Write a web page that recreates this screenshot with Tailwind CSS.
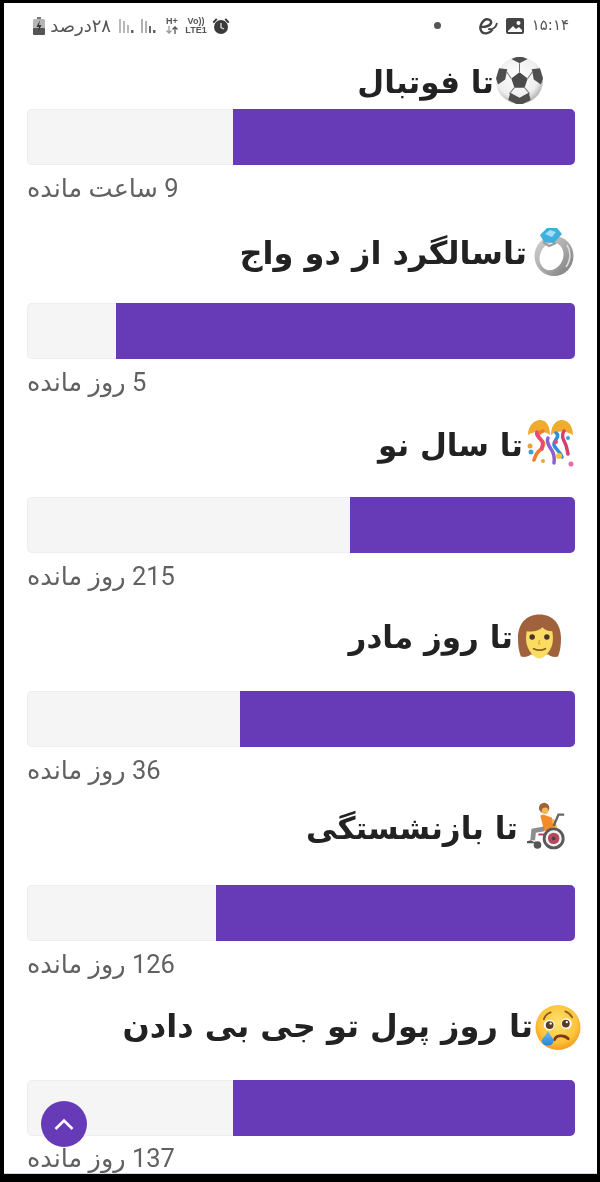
<!DOCTYPE html>
<html lang="fa">
<head>
    <meta charset="UTF-8">
    <title>تا فوتبال</title>
    <meta name="viewport" content="width=device-width, initial-scale=1"/>
    <script src="https://cdn.jsdelivr.net/npm/@tailwindcss/browser@4"></script>
</head>
<body class="bg-black">
<div class="w-[600px] h-[1182px] bg-black pt-[3px] pl-[4px] pr-[3px] pb-[8px] overflow-hidden">
    <div class="relative w-full h-full bg-white overflow-hidden border-b border-gray-300 blur-[0.4px] font-['DejaVu_Sans',sans-serif]">

        <!--Status bar-->
        <div class="h-[45px] pl-[29px] pr-[28px] flex items-center text-[#555555]">
            <svg width="12" height="18" viewBox="0 0 12 18" class="mr-[4px]">
                <rect x="4" y="0" width="4" height="2" fill="#777"/>
                <rect x="0" y="2" width="12" height="16" rx="1.500" fill="#b5b5b5"/>
                <rect x="0" y="11" width="12" height="7" rx="1" fill="#555"/>
                <path d="M7 3 3.500 10h2.500L5 15l3.500-7H6z" fill="#333"/>
            </svg>
            <span dir="rtl" class="text-[18px] w-[62px] whitespace-nowrap">۲۸درصد</span>
            <svg width="15" height="16" viewBox="0 0 15 16" class="ml-[8px]" fill="#b9b9b9">
                <rect x="0" y="1" width="2" height="14"/><rect x="4" y="3" width="2" height="12"/><rect x="8" y="7" width="2" height="8"/><rect x="12" y="12" width="2.500" height="3" fill="#666"/>
            </svg>
            <svg width="15" height="16" viewBox="0 0 15 16" class="ml-[7px]" fill="#b0b0b0">
                <rect x="0" y="1" width="2" height="14"/><rect x="4" y="3" width="2" height="12"/><rect x="8" y="8" width="2" height="7" fill="#666"/><rect x="12" y="12" width="2.500" height="3" fill="#666"/>
            </svg>
            <div class="ml-[9px] w-[14px] flex flex-col items-center font-['Liberation_Sans',sans-serif] font-bold text-[9px] leading-[9px]">
                <span>H+</span>
                <svg width="14" height="8" viewBox="0 0 14 8" fill="none" stroke="#555" stroke-width="1.300"><path d="M4 0v7M1.500 4.500 4 7l2.500-2.500" stroke="#999"/><path d="M10 8V1M7.500 3.500 10 1l2.500 2.500"/></svg>
            </div>
            <div class="ml-[6px] w-[22px] flex flex-col items-center font-['Liberation_Sans',sans-serif] font-bold text-[9px] leading-[9px]">
                <span>Vo))</span>
                <span>LTE1</span>
            </div>
            <svg width="18" height="18" viewBox="0 0 18 18" class="ml-[5px]" fill="#3a3a3a">
                <circle cx="9" cy="10" r="7"/>
                <path d="M0.500 5 4 1.200l1.500 1.300L2 6.300zM17.500 5 14 1.200l-1.500 1.300L16 6.300z"/>
                <path d="M9 6v4.500l3 1.500" fill="none" stroke="#ddd" stroke-width="1.300"/>
            </svg>
            <span class="ml-auto mr-[37px] w-[7px] h-[7px] rounded-full bg-[#555555]"></span>
            <svg width="20" height="18" viewBox="0 0 20 18" class="mr-[8px]" fill="none" stroke="#444" stroke-width="2.400">
                <path d="M2.500 9.500c4 1 9.500-.5 10.500-3.500S9 1 6 3.500 1 11 3.500 14.500s9 1.500 11-2"/>
                <path d="M10 12c4 1 8-1 9-6" stroke-width="1.800"/>
            </svg>
            <svg width="18" height="16" viewBox="0 0 18 16" class="mr-[9px]">
                <rect width="18" height="16" rx="2" fill="#444"/>
                <path d="M2 13 7 8l3 3 3-2 3 3v2H2z" fill="#fff"/>
                <circle cx="12.500" cy="5" r="2" fill="#fff"/>
            </svg>
            <span dir="rtl" class="text-[15px] w-[36px] whitespace-nowrap">۱۵:۱۴</span>
        </div>

        <!--Football-->
        <section>
            <div dir="rtl" class="h-[61px] pr-[54px] flex items-start gap-[2px]">
                <svg width="47" height="47" viewBox="0 0 46 46" class="mt-[9px] shrink-0">
                    <defs><radialGradient id="ball" cx="45%" cy="40%" r="60%"><stop offset="0" stop-color="#fff"/><stop offset="0.75" stop-color="#eee"/><stop offset="1" stop-color="#b5b5b5"/></radialGradient></defs>
                    <circle cx="23" cy="23" r="23" fill="url(#ball)"/>
                    <path d="M23 15 31 21 28 30H18L15 21Z" fill="#4a4a4a"/>
                    <path d="M15 2 23 6 31 2 26 0H20ZM3 11 11 12 9 22 2 27 0 21ZM43 11 35 12 37 22 44 27 46 21ZM12 42 14 35 23 40 32 35 34 42 26 46H20Z" fill="#4f4f4f"/>
                    <path d="M23 15V6M15 21 10 14M31 21 36 14M18 30 13 36M28 30 33 36" stroke="#777" stroke-width="1"/>
                </svg>
                <h2 class="text-[31px] font-bold leading-[46px] mt-[11px] text-[#222222] whitespace-nowrap">تا فوتبال</h2>
            </div>
            <div dir="rtl" class="ml-[23px] mr-[22px] h-14 bg-[#f5f5f5] shadow-[inset_0_0_0_1px_#eeeeee] rounded-[5px] overflow-hidden">
                <div class="w-[342px] h-full bg-[#673ab7]"></div>
            </div>
            <p dir="rtl" class="ml-[23px] w-fit h-[46px] leading-[47px] text-[25.5px] text-[#616161] font-['Roboto','DejaVu_Sans',sans-serif] whitespace-nowrap">9 ساعت مانده</p>
        </section>

        <!--Anniversary-->
        <section>
            <div dir="rtl" class="h-[92px] pr-[23px] flex items-start gap-[7px]">
                <svg width="40" height="50" viewBox="0 0 40 50" class="mt-[16px] shrink-0">
                    <defs>
                        <linearGradient id="band" x1="0" y1="0" x2="1" y2="1"><stop offset="0" stop-color="#d4d4d4"/><stop offset="0.55" stop-color="#a8a8a8"/><stop offset="1" stop-color="#777777"/></linearGradient>
                    </defs>
                    <ellipse cx="20" cy="29" rx="19.500" ry="20" fill="url(#band)"/>
                    <ellipse cx="17.500" cy="29.500" rx="11.500" ry="14" fill="#fff" transform="rotate(25 17.500 29.500)"/>
                    <path d="M33 18c4 6 4 15-1 22" fill="none" stroke="#e0e0e0" stroke-width="1.500"/>
                    <path d="M6 8 13 1 23 1 28 7 20 16 10 15Z" fill="#3fb0de"/>
                    <path d="M11 7 16 3 22 5 18 10Z" fill="#a2e0f7"/>
                    <path d="M9 15 15 19 22 16" fill="none" stroke="#9a9a9a" stroke-width="2"/>
                </svg>
                <h2 class="text-[32px] font-bold leading-[46px] mt-[19px] text-[#222222] whitespace-nowrap">تاسالگرد از دو واج</h2>
            </div>
            <div dir="rtl" class="ml-[23px] mr-[22px] h-14 bg-[#f5f5f5] shadow-[inset_0_0_0_1px_#eeeeee] rounded-[5px] overflow-hidden">
                <div class="w-[459px] h-full bg-[#673ab7]"></div>
            </div>
            <p dir="rtl" class="ml-[23px] w-fit h-[46px] leading-[47px] text-[25.5px] text-[#616161] font-['Roboto','DejaVu_Sans',sans-serif] whitespace-nowrap">5 روز مانده</p>
        </section>

        <!--New year-->
        <section>
            <div dir="rtl" class="h-[92px] pr-[23px] flex items-start gap-[4px]">
                <svg width="47" height="50" viewBox="0 0 47 50" class="mt-[13px] shrink-0">
                    <path d="M1 17C1 7 8 2 13 2s10 4 10 15C15 12 8 13 1 17Z" fill="#f0ab2e"/>
                    <path d="M24 17C24 6 30 2 35 2s11 5 11 15C39 13 31 12 24 17Z" fill="#f0ab2e"/>
                    <g fill="none" stroke-width="3.500" stroke-linecap="round">
                        <path d="M16 13c-6 2-6 6-2 9s3 7-1 10-5 7-6 10" stroke="#ee7d2e"/>
                        <path d="M10 14c-2 4 3 5 5 9s-1 5 0 8" stroke="#e8487b"/>
                        <path d="M21 20c-2 4 1 8 3 11s4 8 3 14" stroke="#8d5fd3"/>
                        <path d="M29 15c5 3-3 8-2 12s6 6 8 12" stroke="#2e8fd8"/>
                        <path d="M37 13c-3 4-1 8 1 12s2 7 3 11" stroke="#d2416f"/>
                    </g>
                    <circle cx="3" cy="28" r="2.500" fill="#e8a33a"/><circle cx="4" cy="34" r="2.500" fill="#3aa0e0"/><circle cx="41" cy="20" r="2" fill="#3aa0e0"/><circle cx="44" cy="46" r="2.500" fill="#e86aa6"/><circle cx="16" cy="43" r="2" fill="#e8a33a"/><circle cx="32" cy="38" r="3" fill="#f3c33c"/><circle cx="29" cy="24" r="2" fill="#e8487b"/>
                </svg>
                <h2 class="text-[31px] font-bold leading-[46px] mt-[17px] text-[#222222] whitespace-nowrap">تا سال نو</h2>
            </div>
            <div dir="rtl" class="ml-[23px] mr-[22px] h-14 bg-[#f5f5f5] shadow-[inset_0_0_0_1px_#eeeeee] rounded-[5px] overflow-hidden">
                <div class="w-[225px] h-full bg-[#673ab7]"></div>
            </div>
            <p dir="rtl" class="ml-[23px] w-fit h-[46px] leading-[47px] text-[25.5px] text-[#616161] font-['Roboto','DejaVu_Sans',sans-serif] whitespace-nowrap">215 روز مانده</p>
        </section>

        <!--Mother's day-->
        <section>
            <div dir="rtl" class="h-[92px] pr-[35px] flex items-start gap-[4px]">
                <svg width="45" height="46" viewBox="0 0 46 46" class="mt-[15px] shrink-0">
                    <path d="M23 0C9 0 1 10 1 24c0 8 1 14 3 19 4 1 8 0 10-2h18c2 2 6 3 10 2 2-5 3-11 3-19C45 10 37 0 23 0Z" fill="#a0623c"/>
                    <path d="M10 17c6 1 12 0 16-4 2 3 6 4 10 4 1 5 1 9 0 14-2 7-8 14-13 14S12 38 10 31c-1-5-1-9 0-14Z" fill="#fbdc62"/>
                    <circle cx="15.500" cy="23" r="2.800" fill="#4a3526"/><circle cx="30.500" cy="23" r="2.800" fill="#4a3526"/>
                    <path d="M23 26 22 30h2" fill="none" stroke="#d69c3c" stroke-width="1"/>
                    <path d="M17 35c4 2 8 2 12 0" fill="none" stroke="#8a5a2a" stroke-width="1.800" stroke-linecap="round"/>
                </svg>
                <h2 class="text-[31px] font-bold leading-[46px] mt-[15px] text-[#222222] whitespace-nowrap">تا روز مادر</h2>
            </div>
            <div dir="rtl" class="ml-[23px] mr-[22px] h-14 bg-[#f5f5f5] shadow-[inset_0_0_0_1px_#eeeeee] rounded-[5px] overflow-hidden">
                <div class="w-[335px] h-full bg-[#673ab7]"></div>
            </div>
            <p dir="rtl" class="ml-[23px] w-fit h-[46px] leading-[47px] text-[25.5px] text-[#616161] font-['Roboto','DejaVu_Sans',sans-serif] whitespace-nowrap">36 روز مانده</p>
        </section>

        <!--Retirement-->
        <section>
            <div dir="rtl" class="h-[92px] pr-[30px] flex items-start gap-[9px]">
                <svg width="40" height="48" viewBox="0 0 42 50" class="mt-[9px] shrink-0">
                    <circle cx="18" cy="6" r="5.500" fill="#a0623c"/>
                    <circle cx="19" cy="9" r="3.500" fill="#f7b458"/>
                    <path d="M14 14 17 13 26 16 30 30H18Z" fill="#f38a2c"/>
                    <path d="M27 18 30 26 27 28" fill="none" stroke="#f7b458" stroke-width="3"/>
                    <path d="M18 28 7 30 6 40" fill="none" stroke="#8d8d8d" stroke-width="5"/>
                    <path d="M4 40 0 41V43L10 43Z" fill="#555"/>
                    <path d="M28 25 33 13H39" fill="none" stroke="#666" stroke-width="2.500"/>
                    <path d="M12 34H27M8 42 13 45" fill="none" stroke="#c23b52" stroke-width="2"/>
                    <circle cx="28" cy="38" r="10" fill="#f3f3f3" stroke="#5a5a5a" stroke-width="3"/>
                    <circle cx="28" cy="38" r="6" fill="#b8495d"/>
                    <circle cx="28" cy="38" r="2" fill="#444"/>
                    <circle cx="11" cy="45" r="4" fill="#555"/>
                </svg>
                <h2 class="text-[31px] font-bold leading-[46px] mt-[12px] text-[#222222] whitespace-nowrap">تا بازنشستگی</h2>
            </div>
            <div dir="rtl" class="ml-[23px] mr-[22px] h-14 bg-[#f5f5f5] shadow-[inset_0_0_0_1px_#eeeeee] rounded-[5px] overflow-hidden">
                <div class="w-[359px] h-full bg-[#673ab7]"></div>
            </div>
            <p dir="rtl" class="ml-[23px] w-fit h-[46px] leading-[47px] text-[25.5px] text-[#616161] font-['Roboto','DejaVu_Sans',sans-serif] whitespace-nowrap">126 روز مانده</p>
        </section>

        <!--GB money-->
        <section>
            <div dir="rtl" class="h-[93px] pr-[16px] flex items-start gap-[2px]">
                <svg width="46" height="47" viewBox="0 0 47 47" class="mt-[17px] shrink-0">
                    <defs>
                        <radialGradient id="face" cx="50%" cy="40%" r="60%"><stop offset="0" stop-color="#fee371"/><stop offset="0.7" stop-color="#fcc43a"/><stop offset="1" stop-color="#f59a1e"/></radialGradient>
                        <linearGradient id="tear" x1="0" y1="0" x2="0" y2="1"><stop offset="0" stop-color="#6cc0f0"/><stop offset="1" stop-color="#2a80d8"/></linearGradient>
                    </defs>
                    <circle cx="23.500" cy="23.500" r="23" fill="url(#face)"/>
                    <path d="M9 15c1-4 4-6 7-7M31 7c3 1 5 3 7 6" fill="none" stroke="#8a5a20" stroke-width="1.800" stroke-linecap="round"/>
                    <circle cx="14.500" cy="21" r="5.500" fill="#fff"/><circle cx="32" cy="19.500" r="5.500" fill="#fff"/>
                    <circle cx="15" cy="21" r="4" fill="#5a3a20"/><circle cx="31.500" cy="19.500" r="4" fill="#5a3a20"/>
                    <circle cx="16" cy="19.500" r="1.200" fill="#fff"/><circle cx="32.500" cy="18" r="1.200" fill="#fff"/>
                    <path d="M20 36c1-4 9-6 14-1" fill="none" stroke="#7a3a1a" stroke-width="2.800" stroke-linecap="round"/>
                    <path d="M13 27c3 5 6 8 6 10a6 5 0 0 1-12 0c0-2 4-5 6-10Z" fill="url(#tear)"/>
                </svg>
                <h2 class="text-[32px] font-bold leading-[46px] mt-[16px] text-[#222222] whitespace-nowrap">تا روز پول تو جی بی دادن</h2>
            </div>
            <div dir="rtl" class="ml-[23px] mr-[22px] h-14 bg-[#f5f5f5] shadow-[inset_0_0_0_1px_#eeeeee] rounded-[5px] overflow-hidden">
                <div class="w-[342px] h-full bg-[#673ab7]"></div>
            </div>
            <p dir="rtl" class="ml-[23px] w-fit h-[46px] leading-[45px] text-[25.5px] text-[#616161] font-['Roboto','DejaVu_Sans',sans-serif] whitespace-nowrap">137 روز مانده</p>
        </section>

        <!--Back to top-->
        <button class="absolute left-[37px] top-[1098px] w-[46px] h-[46px] rounded-full bg-[#673ab7] flex items-center justify-center">
            <svg width="20" height="12" viewBox="0 0 20 12" fill="none" stroke="#fff" stroke-width="2.600"><path d="M1.500 11 10 2.500l8.500 8.500"/></svg>
        </button>
    </div>
</div>
</body>
</html>
